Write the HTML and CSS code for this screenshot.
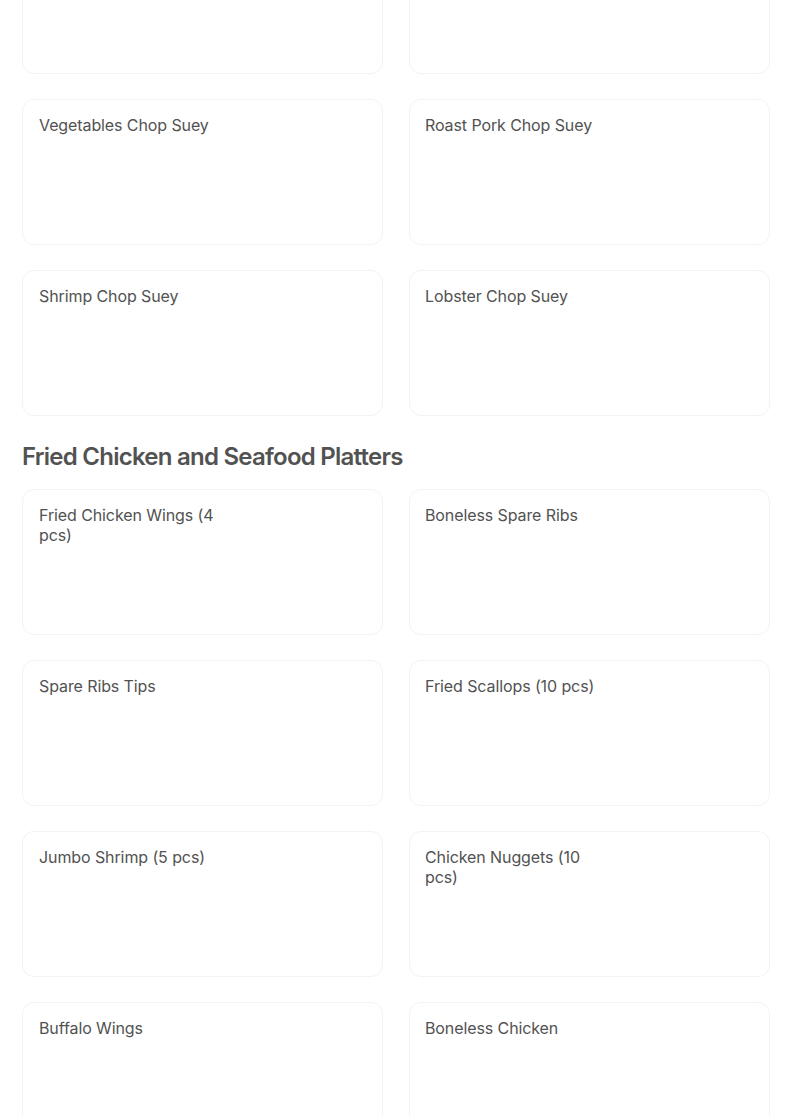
FILE: index.html
```html
<!DOCTYPE html>
<html>
<head>
<meta charset="utf-8">
<link rel="stylesheet" href="styles.css">
</head>
<body>
<main class="menu">
  <section class="grid">
    <div class="card"></div>
    <div class="card"></div>
    <div class="card"><div class="title">Vegetables Chop Suey</div></div>
    <div class="card"><div class="title">Roast Pork Chop Suey</div></div>
    <div class="card"><div class="title">Shrimp Chop Suey</div></div>
    <div class="card"><div class="title">Lobster Chop Suey</div></div>
  </section>
  <h2 class="section-title">Fried Chicken and Seafood Platters</h2>
  <section class="grid">
    <div class="card"><div class="title">Fried Chicken Wings (4 pcs)</div></div>
    <div class="card"><div class="title">Boneless Spare Ribs</div></div>
    <div class="card"><div class="title">Spare Ribs Tips</div></div>
    <div class="card"><div class="title">Fried Scallops (10 pcs)</div></div>
    <div class="card"><div class="title">Jumbo Shrimp (5 pcs)</div></div>
    <div class="card"><div class="title">Chicken Nuggets (10 pcs)</div></div>
    <div class="card"><div class="title">Buffalo Wings</div></div>
    <div class="card"><div class="title">Boneless Chicken</div></div>
  </section>
</main>
</body>
</html>
```
FILE: styles.css
```css
html, body {
  margin: 0;
  padding: 0;
  background: #ffffff;
}
body {
  font-family: Inter, "Noto Sans", sans-serif;
  color: #545454;
}
.menu {
  padding: 0 34px 0 22px;
  margin-top: -72px;
}
.grid {
  display: grid;
  grid-template-columns: 361px 361px;
  column-gap: 26px;
  row-gap: 25px;
}
.card {
  height: 146px;
  box-sizing: border-box;
  border: 1px solid #f3f3f3;
  border-radius: 12px;
  padding: 15px 16px 16px;
  background: #fff;
}
.card:nth-child(even) {
  padding-left: 15px;
}
.title {
  max-width: 190px;
  font-size: 16px;
  line-height: 20px;
  font-weight: 400;
  letter-spacing: -0.1px;
  color: #525252;
}
.section-title {
  margin: 25px 0 16px;
  font-size: 24px;
  line-height: 32px;
  font-weight: 600;
  letter-spacing: -0.75px;
  color: #525252;
}
```
